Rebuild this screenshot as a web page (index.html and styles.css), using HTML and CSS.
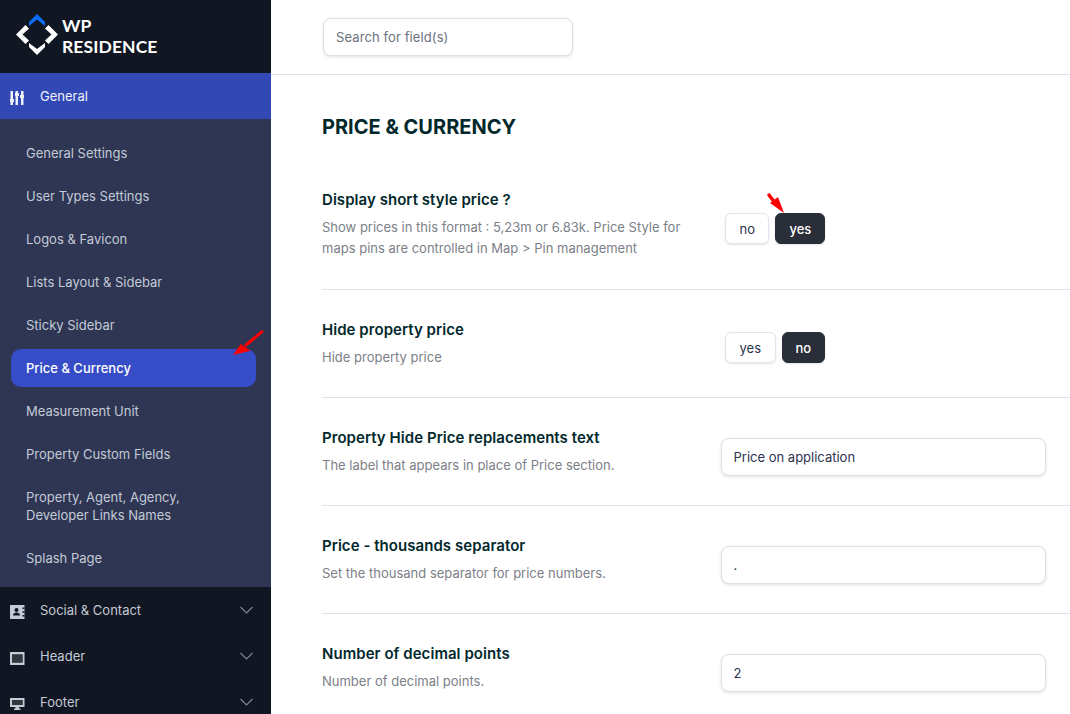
FILE: index.html
```html
<!DOCTYPE html>
<html lang="en">

<head>
    <meta charset="UTF-8">
    <meta name="viewport" content="width=device-width, initial-scale=1.0">
    <title>Theme Options</title>
    <link rel="stylesheet" href="styles.css">
</head>

<body>
    <div class="page">
        <aside class="sidebar">
            <div class="logo">
                <svg class="logo-mark" width="44" height="44" viewBox="0 0 44 44">
                    <path d="M22 1 L30 9 L30 13 L22 6.500 L14 13 L14 9 Z" fill="#0d6efd"/>
                    <path d="M1 21.500 L10.500 12 L14 15.500 L7.500 21.500 L14 27.500 L10.500 31 Z" fill="#fff"/>
                    <path d="M43 21.500 L33.500 12 L30 15.500 L36.500 21.500 L30 27.500 L33.500 31 Z" fill="#fff"/>
                    <path d="M22 42 L14 34 L14 30 L22 36 L30 30 L30 34 Z" fill="#fff"/>
                </svg>
                <div class="logo-text">WP<br>RESIDENCE</div>
            </div>

            <div class="menu-head active">
                <svg class="menu-icon" width="16" height="18" viewBox="0 0 16 18" fill="#eef0fa">
                    <rect x="1.500" y="4" width="2.500" height="14"/>
                    <rect x="6.500" y="4" width="2.500" height="14"/>
                    <rect x="12" y="4" width="2.500" height="14"/>
                    <rect x="1" y="12" width="4" height="3"/>
                    <rect x="6" y="6" width="4" height="3"/>
                    <rect x="11" y="8" width="4" height="3"/>
                </svg>
                <span>General</span>
            </div>
            <ul class="submenu">
                <li>General Settings</li>
                <li>User Types Settings</li>
                <li>Logos &amp; Favicon</li>
                <li>Lists Layout &amp; Sidebar</li>
                <li>Sticky Sidebar</li>
                <li class="current">Price &amp; Currency</li>
                <li>Measurement Unit</li>
                <li>Property Custom Fields</li>
                <li>Property, Agent, Agency,<br>Developer Links Names</li>
                <li>Splash Page</li>
            </ul>

            <div class="menu-head">
                <svg class="menu-icon" width="16" height="18" viewBox="0 0 16 18">
                    <path fill="#c4cad6" fill-rule="evenodd" d="M1 4h14.500v14H1z M7.500 7a2 2 0 1 0 0.010 0z M4 14.500h7c0-2-1.500-3-3.500-3s-3.500 1-3.500 3z"/>
                    <path fill="#111722" d="M13.500 6.500h2v1.500h-2z M13.500 10.200h2v1.500h-2z M13.500 14h2v1.500h-2z"/>
                </svg>
                <span>Social &amp; Contact</span>
                <svg class="chevron" width="13" height="8" viewBox="0 0 13 8"><path d="M0.500 1l6 6 6-6" fill="none" stroke="#7c8391" stroke-width="1.200"/></svg>
            </div>
            <div class="menu-head">
                <svg class="menu-icon" width="16" height="18" viewBox="0 0 16 18">
                    <path fill="#c4cad6" fill-rule="evenodd" d="M1 5h14.500v13H1z M3 7.500v8h10.500v-8z"/>
                    <path fill="#33383f" d="M3 7.500h10.500v8H3z"/>
                </svg>
                <span>Header</span>
                <svg class="chevron" width="13" height="8" viewBox="0 0 13 8"><path d="M0.500 1l6 6 6-6" fill="none" stroke="#7c8391" stroke-width="1.200"/></svg>
            </div>
            <div class="menu-head">
                <svg class="menu-icon" width="16" height="18" viewBox="0 0 16 18">
                    <path fill="#c4cad6" fill-rule="evenodd" d="M1 5h14.500v9H1z M3 7v5h10.500V7z M6.500 14h3.500v1.500h1.500V17H5v-1.500h1.500z"/>
                    <path fill="#33383f" d="M3 7h10.500v5H3z"/>
                </svg>
                <span>Footer</span>
                <svg class="chevron" width="13" height="8" viewBox="0 0 13 8"><path d="M0.500 1l6 6 6-6" fill="none" stroke="#7c8391" stroke-width="1.200"/></svg>
            </div>
        </aside>

        <main class="content">
            <div class="topbar">
                <input class="field search" type="text" placeholder="Search for field(s)">
            </div>

            <div class="section">
                <h1>PRICE &amp; CURRENCY</h1>

                <div class="option first">
                    <div class="option-text">
                        <h3>Display short style price ?</h3>
                        <p>Show prices in this format : 5,23m or 6.83k. Price Style for maps pins are controlled in Map &gt; Pin management</p>
                    </div>
                    <div class="toggle">
                        <button class="btn">no</button>
                        <button class="btn on">yes</button>
                    </div>
                </div>

                <div class="option short">
                    <div class="option-text">
                        <h3>Hide property price</h3>
                        <p>Hide property price</p>
                    </div>
                    <div class="toggle">
                        <button class="btn">yes</button>
                        <button class="btn on">no</button>
                    </div>
                </div>

                <div class="option">
                    <div class="option-text">
                        <h3>Property Hide Price replacements text</h3>
                        <p>The label that appears in place of Price section.</p>
                    </div>
                    <input class="field" type="text" value="Price on application">
                </div>

                <div class="option">
                    <div class="option-text">
                        <h3>Price - thousands separator</h3>
                        <p>Set the thousand separator for price numbers.</p>
                    </div>
                    <input class="field" type="text" value=".">
                </div>

                <div class="option">
                    <div class="option-text">
                        <h3>Number of decimal points</h3>
                        <p>Number of decimal points.</p>
                    </div>
                    <input class="field" type="text" value="2">
                </div>
            </div>
        </main>

        <!-- red arrows drawn over the screenshot -->
        <svg class="arrow arrow-side" width="34" height="30" viewBox="0 0 34 30">
            <path d="M30 3.700 L14 17" stroke="#f00" stroke-width="3" stroke-linecap="round"/>
            <path d="M1 27 L8.700 16 L18.700 22.700 Z" fill="#f00"/>
        </svg>
        <svg class="arrow arrow-yes" width="22" height="24" viewBox="0 0 22 24">
            <path d="M3 3 L9 11" stroke="#f00" stroke-width="3.500" stroke-linecap="round"/>
            <path d="M18 21 L4 11 L12 5 Z" fill="#f00"/>
        </svg>
    </div>
</body>

</html>
```

FILE: styles.css
```css
* {
    box-sizing: border-box;
}

html,
body {
    margin: 0;
    height: 714px;
    overflow: hidden;
    background: #fff;
}

body {
    font-family: "Inter", "Liberation Sans", sans-serif;
}

.page {
    position: relative;
    display: flex;
    width: 1070px;
    height: 714px;
    overflow: hidden;
}

/* sidebar */
.sidebar {
    width: 271px;
    flex: none;
    height: 714px;
    overflow: hidden;
    background-color: #111722;
}

.logo {
    display: flex;
    align-items: center;
    height: 73px;
    padding-left: 15px;
    gap: 3px;
}

.logo-mark {
    flex: none;
    margin-top: -4px;
}

.logo-text {
    color: #fff;
    font-family: "Lato", sans-serif;
    font-size: 17.5px;
    font-weight: 700;
    line-height: 21px;
    letter-spacing: 0.1px;
    margin-top: -2px;
}

.menu-head {
    display: flex;
    align-items: center;
    height: 46px;
    padding-left: 9px;
    padding-right: 18px;
    color: #c4cad6;
    font-size: 13px;
}

.menu-head.active {
    background-color: #3249b5;
    color: #eef0fa;
}

.menu-icon {
    flex: none;
    margin-right: 15px;
}

.chevron {
    margin-left: auto;
}

.submenu {
    list-style: none;
    margin: 0;
    padding: 15px 15px 10px 11px;
    background-color: #2e3654;
}

.submenu li {
    padding: 10px 15px;
    margin-bottom: 5px;
    color: #c4cad6;
    font-size: 13px;
    line-height: 18px;
    border-radius: 10px;
}

.submenu li:last-child {
    margin-bottom: 0;
}

.submenu li.current {
    background-color: #364dc7;
    color: #fff;
    font-weight: 500;
}

/* main area */
.content {
    flex: 1;
    min-width: 0;
}

.topbar {
    height: 75px;
    padding: 18px 0 0 52px;
    border-bottom: 1px solid #dfe1e8;
}

.field {
    display: block;
    width: 325px;
    height: 38px;
    padding: 0 11.5px;
    border: 1px solid #dfe1e8;
    border-radius: 8px;
    box-shadow: 0 1px 3px rgba(30, 40, 80, 0.14);
    background: #fff;
    color: #2c3350;
    font-family: inherit;
    font-size: 13px;
    outline: none;
}

.field::placeholder {
    color: #6b7280;
    opacity: 1;
}

.search {
    width: 250px;
    padding: 0 12px;
    letter-spacing: 0.1px;
}

.section {
    padding: 0 0 0 51px;
}

h1 {
    margin: 0;
    padding-top: 40px;
    height: 85px;
    color: #02282c;
    font-size: 20px;
    font-weight: 700;
    line-height: 24px;
}

.option {
    display: flex;
    align-items: flex-start;
    height: 108px;
    padding-top: 31px;
    border-bottom: 1px solid #dfe1e8;
}

.option.first {
    height: 130px;
}

.option > .field {
    margin-top: 9px;
}

.option-text {
    width: 399px;
    flex: none;
    padding-right: 35px;
}

h3 {
    margin: 0;
    color: #02282c;
    font-size: 15px;
    font-weight: 600;
    line-height: 18px;
    letter-spacing: 0.05px;
}

.option-text p {
    margin: 8px 0 0;
    color: #7b8088;
    font-size: 13px;
    line-height: 21px;
}

.toggle {
    display: flex;
    gap: 6px;
    margin-left: 4px;
    margin-top: 11px;
}

.first .toggle {
    margin-top: 22px;
}

.btn {
    height: 31px;
    padding: 0 13.5px;
    border: 1px solid #e3e5ea;
    border-radius: 6px;
    box-shadow: 0 1px 2px rgba(30, 40, 80, 0.12);
    background: #fff;
    color: #2c3350;
    font-family: inherit;
    font-size: 13px;
}

.btn.on {
    padding: 0 13px;
    background-color: #2a2e38;
    border-color: #2a2e38;
    color: #fff;
    font-weight: 500;
}

/* annotations */
.arrow {
    position: absolute;
}

.arrow-side {
    left: 232px;
    top: 328px;
}

.arrow-yes {
    left: 766px;
    top: 192px;
}
```
